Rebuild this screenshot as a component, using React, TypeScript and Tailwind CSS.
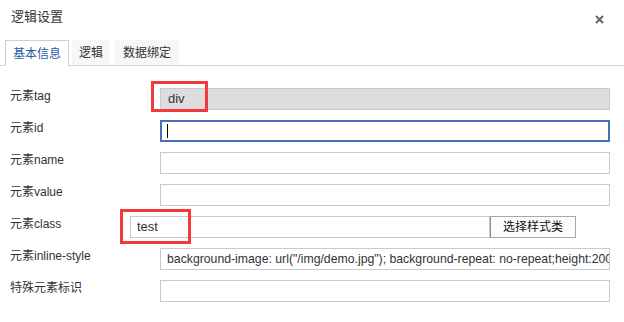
import React from "react";

const font = { fontFamily: '"Liberation Sans", Arial, "Noto Sans CJK SC", sans-serif' };

function Field({
  children,
  className = "",
  size = "text-[13px]",
}: {
  children?: React.ReactNode;
  className?: string;
  size?: string;
}) {
  return (
    <div
      className={
        "h-[22px] border border-[#c6cbd1] px-[6px] leading-[20px] text-[#333] whitespace-nowrap overflow-hidden " +
        size +
        " " +
        className
      }
    >
      {children}
    </div>
  );
}

function Row({ label, children }: { label: string; children: React.ReactNode }) {
  return (
    <div className="flex items-start h-[22px]">
      <div className="w-[150px] text-[12px] leading-[16px] text-[#333]">{label}</div>
      {children}
    </div>
  );
}

export default function App() {
  return (
    <div className="relative w-[624px] h-[322px] bg-white overflow-hidden" style={font}>
      {/* title */}
      <div className="flex items-center justify-between h-[30px] pt-[4px] pl-[11px] pr-[20px]">
        <div className="text-[13px] leading-[18px] text-[#333]">逻辑设置</div>
        <svg width="9" height="9" viewBox="0 0 9 9" className="mt-[4px]">
          <path d="M1 1 L8 8 M8 1 L1 8" stroke="#666" strokeWidth="2" />
        </svg>
      </div>

      {/* tabs */}
      <div className="mt-[10px] flex items-end h-[26px] border-b border-[#d4d4d4] pl-[5px]">
        <div className="h-[26px] w-[64px] -mb-px pt-[2px] bg-white border border-b-0 border-[#cfcfcf] text-[12px] leading-[23px] text-center text-[#2b5ba8]">
          基本信息
        </div>
        <div className="ml-[3px] h-[25px] w-[38px] pt-[2px] bg-[#f7f7f7] text-[12px] leading-[23px] text-center text-[#333]">
          逻辑
        </div>
        <div className="ml-[5px] h-[25px] w-[64px] pt-[2px] bg-[#f7f7f7] text-[12px] leading-[23px] text-center text-[#333]">
          数据绑定
        </div>
      </div>

      {/* form */}
      <div className="flex flex-col gap-[10px] pt-[22px] pl-[10px]">
        <Row label="元素tag">
          <Field className="w-[450px] bg-[#dddddd] pl-[7px]">div</Field>
        </Row>
        <Row label="元素id">
          <div className="w-[450px] h-[22px] border-2 border-[#4470b8] flex items-center pl-[5px]">
            <div className="w-px h-[14px] bg-black" />
          </div>
        </Row>
        <Row label="元素name">
          <Field className="w-[450px]" />
        </Row>
        <Row label="元素value">
          <Field className="w-[450px]" />
        </Row>
        <div className="flex items-start h-[22px]">
          <div className="w-[120px] text-[12px] leading-[16px] text-[#333]">元素class</div>
          <Field className="w-[360px] pl-[6px]">test</Field>
          <button className="w-[86px] h-[22px] border border-[#a8a8a8] border-l-[#8a8a8a] bg-[#fdfdfd] text-[12px] leading-[20px] text-[#111]">
            选择样式类
          </button>
        </div>
        <Row label="元素inline-style">
          <Field className="w-[450px] pl-[6px]" size="text-[12.25px]">
            background-image: url("/img/demo.jpg"); background-repeat: no-repeat;height:200px;
          </Field>
        </Row>
        <Row label="特殊元素标识">
          <Field className="w-[450px]" />
        </Row>
      </div>

      {/* annotation boxes */}
      <div className="absolute left-[151px] top-[81px] w-[57px] h-[31px] border-[3px] border-[#f23a3a]" />
      <div className="absolute left-[120px] top-[209px] w-[71px] h-[35px] border-[3px] border-[#f23a3a]" />
    </div>
  );
}
